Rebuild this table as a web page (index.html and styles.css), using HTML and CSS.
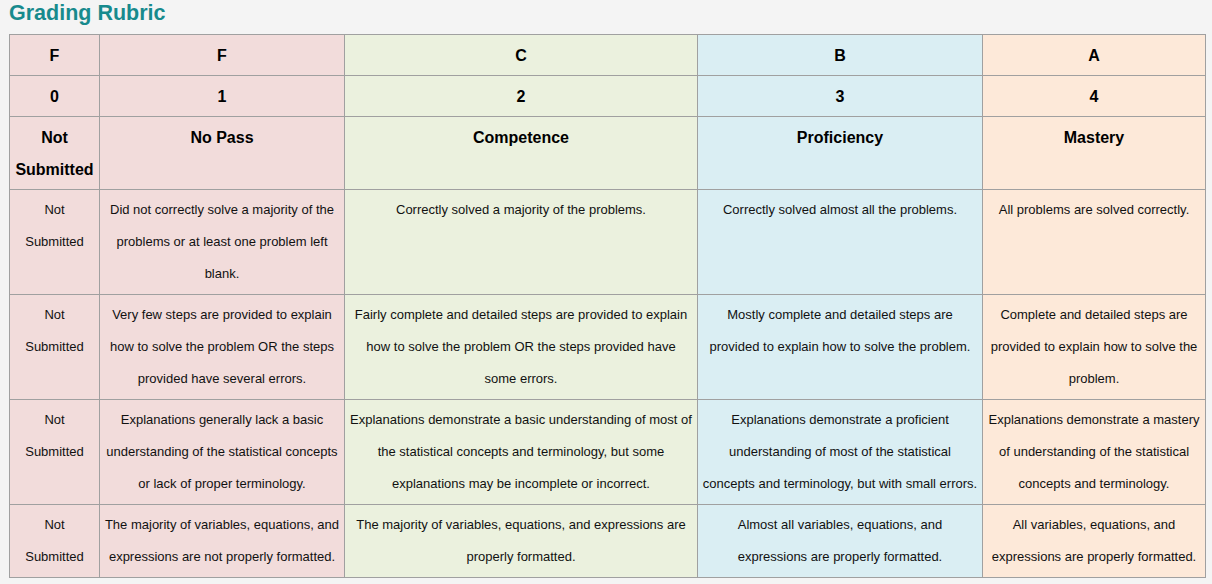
FILE: index.html
```html
<!DOCTYPE html>
<html lang="en">
<head>
<meta charset="utf-8">
<title>Grading Rubric</title>
<link rel="stylesheet" href="styles.css">
</head>
<body>
<h2 class="title">Grading Rubric</h2>
<table class="rubric">
  <colgroup>
    <col class="c0"><col class="c1"><col class="c2"><col class="c3"><col class="c4">
  </colgroup>
  <thead>
    <tr>
      <th class="pink">F</th><th class="pink">F</th><th class="green">C</th><th class="blue">B</th><th class="peach">A</th>
    </tr>
    <tr>
      <th class="pink">0</th><th class="pink">1</th><th class="green">2</th><th class="blue">3</th><th class="peach">4</th>
    </tr>
    <tr class="tall">
      <th class="pink">Not Submitted</th><th class="pink">No Pass</th><th class="green">Competence</th><th class="blue">Proficiency</th><th class="peach">Mastery</th>
    </tr>
  </thead>
  <tbody>
    <tr>
      <td class="pink">Not Submitted</td>
      <td class="pink">Did not correctly solve a majority of the problems or at least one problem left blank.</td>
      <td class="green">Correctly solved a majority of the problems.</td>
      <td class="blue">Correctly solved almost all the problems.</td>
      <td class="peach">All problems are solved correctly.</td>
    </tr>
    <tr>
      <td class="pink">Not Submitted</td>
      <td class="pink">Very few steps are provided to explain how to solve the problem OR the steps provided have several errors.</td>
      <td class="green">Fairly complete and detailed steps are provided to explain how to solve the problem OR the steps provided have some errors.</td>
      <td class="blue">Mostly complete and detailed steps are provided to explain how to solve the problem.</td>
      <td class="peach">Complete and detailed steps are provided to explain how to solve the problem.</td>
    </tr>
    <tr>
      <td class="pink">Not Submitted</td>
      <td class="pink">Explanations generally lack a basic understanding of the statistical concepts or lack of proper terminology.</td>
      <td class="green">Explanations demonstrate a basic understanding of most of the statistical concepts and terminology, but some explanations may be incomplete or incorrect.</td>
      <td class="blue">Explanations demonstrate a proficient understanding of most of the statistical concepts and terminology, but with small errors.</td>
      <td class="peach">Explanations demonstrate a mastery of understanding of the statistical concepts and terminology.</td>
    </tr>
    <tr>
      <td class="pink">Not Submitted</td>
      <td class="pink">The majority of variables, equations, and expressions are not properly formatted.</td>
      <td class="green">The majority of variables, equations, and expressions are properly formatted.</td>
      <td class="blue">Almost all variables, equations, and expressions are properly formatted.</td>
      <td class="peach">All variables, equations, and expressions are properly formatted.</td>
    </tr>
  </tbody>
</table>
</body>
</html>
```

FILE: styles.css
```css
html, body {
  margin: 0;
  padding: 0;
  background: #f4f4f4;
}
body {
  padding: 0 7px 0 9px;
  font-family: "Liberation Sans", Arial, sans-serif;
  color: #111;
}
.title {
  margin: 0;
  height: 34px;
  line-height: 26px;
  font-size: 21.5px;
  font-weight: bold;
  color: #178a8d;
}
.rubric {
  border-collapse: collapse;
  table-layout: fixed;
  width: 1196px;
}
.c0 { width: 90px; }
.c1 { width: 245px; }
.c2 { width: 353px; }
.c3 { width: 285px; }
.c4 { width: 223px; }
.rubric th,
.rubric td {
  border: 1px solid #a0a0a0;
  padding: 4px 4px;
  line-height: 32px;
  text-align: center;
  vertical-align: top;
}
.rubric th {
  padding-top: 5px;
  padding-bottom: 3px;
  font-size: 16px;
  font-weight: bold;
  color: #000;
}
.rubric td {
  font-size: 13px;
  font-weight: normal;
  color: #111;
}
.pink { background: #f2dcdb; }
.green { background: #ebf1de; }
.blue { background: #daeef3; }
.peach { background: #fde9d9; }
```
